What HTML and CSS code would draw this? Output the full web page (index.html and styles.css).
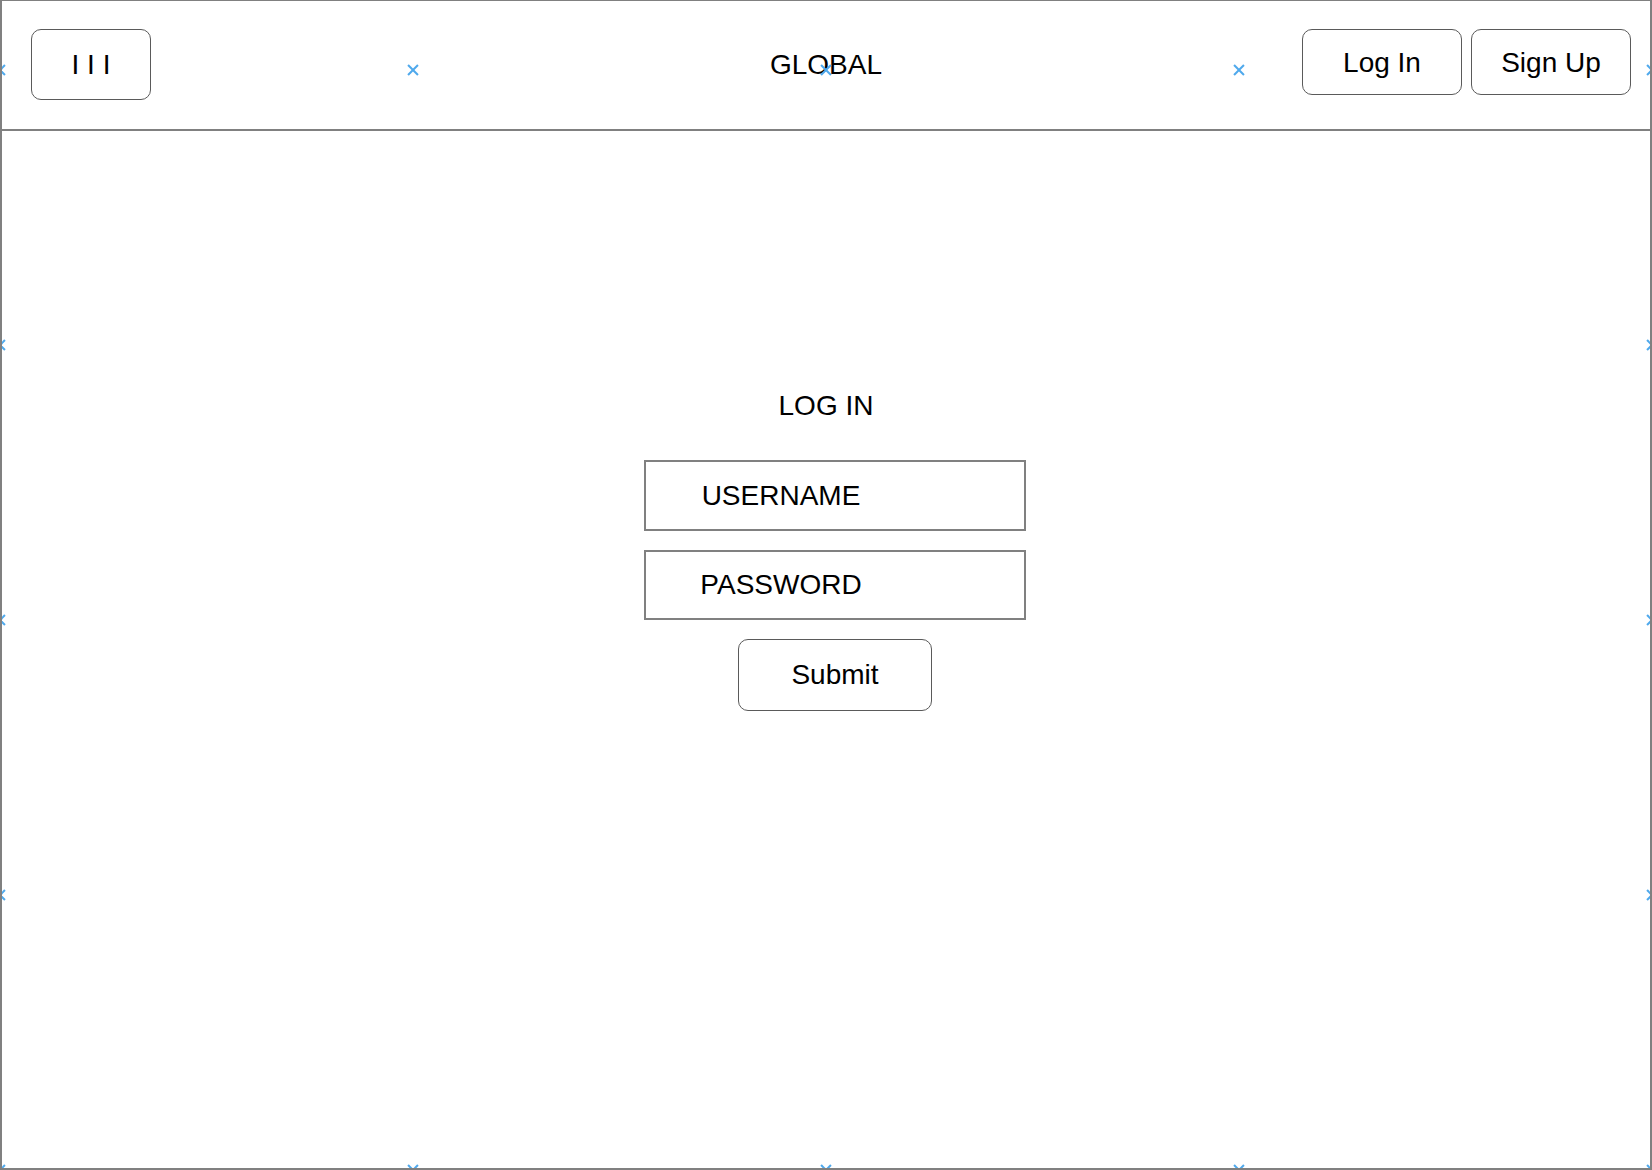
FILE: index.html
```html
<!DOCTYPE html>
<html lang="en">
<head>
<meta charset="utf-8">
<title>GLOBAL - Log In</title>
<link rel="stylesheet" href="styles.css">
</head>
<body>
<div class="page">
  <header class="topbar">
    <div class="menu-btn">I I I</div>
    <div class="brand">GLOBAL</div>
    <div class="auth">
      <div class="btn">Log In</div>
      <div class="btn">Sign Up</div>
    </div>
  </header>
  <main class="main">
    <div class="login">
      <div class="login-title">LOG IN</div>
      <div class="field">USERNAME</div>
      <div class="field field-second">PASSWORD</div>
      <div class="submit">Submit</div>
    </div>
  </main>
  <div class="guides">
    <span class="mark x0 y0"></span>
    <span class="mark x1 y0"></span>
    <span class="mark x2 y0"></span>
    <span class="mark x3 y0"></span>
    <span class="mark x4 y0"></span>
    <span class="mark x0 y1"></span>
    <span class="mark x0 y2"></span>
    <span class="mark x0 y3"></span>
    <span class="mark x4 y1"></span>
    <span class="mark x4 y2"></span>
    <span class="mark x4 y3"></span>
    <span class="mark x0 y4"></span>
    <span class="mark x1 y4"></span>
    <span class="mark x2 y4"></span>
    <span class="mark x3 y4"></span>
    <span class="mark x4 y4"></span>
  </div>
</div>
</body>
</html>
```

FILE: styles.css
```css
html, body {
  margin: 0;
  padding: 0;
  overflow: hidden;
  background: #ffffff;
}

body {
  font-family: "Liberation Sans", Arial, Helvetica, sans-serif;
  color: #000000;
}

.page {
  position: relative;
  box-sizing: border-box;
  width: 1652px;
  height: 1170px;
  border: 2px solid #808080;
  border-top-width: 1px;
  overflow: hidden;
}

.topbar {
  box-sizing: border-box;
  height: 130px;
  border-bottom: 2px solid #808080;
  padding-top: 28px;
  display: grid;
  grid-template-columns: 1fr auto 1fr;
  align-items: start;
}

.menu-btn {
  box-sizing: border-box;
  width: 120px;
  height: 71px;
  margin-left: 29px;
  border: 1px solid #5a5a5a;
  border-radius: 10px;
  display: flex;
  align-items: center;
  justify-content: center;
  font-size: 28px;
  line-height: 32px;
}

.brand {
  margin-top: 20px;
  font-size: 28px;
  line-height: 32px;
}

.auth {
  justify-self: end;
  margin-right: 19px;
  display: flex;
  gap: 9px;
}

.btn {
  box-sizing: border-box;
  width: 160px;
  height: 66px;
  border: 1px solid #5a5a5a;
  border-radius: 10px;
  padding-top: 1px;
  display: flex;
  align-items: center;
  justify-content: center;
  font-size: 28px;
  line-height: 32px;
}

.main {
  padding-top: 259px;
  display: flex;
  justify-content: center;
}

.login {
  display: flex;
  flex-direction: column;
  align-items: center;
}

.login-title {
  font-size: 28px;
  line-height: 32px;
  margin-bottom: 38px;
}

.field {
  box-sizing: border-box;
  width: 382px;
  height: 71px;
  margin-left: 18px;
  border: 2px solid #808080;
  padding-right: 108px;
  display: flex;
  align-items: center;
  justify-content: center;
  font-size: 28px;
  line-height: 32px;
}

.field-second {
  margin-top: 19px;
  height: 70px;
}

.submit {
  box-sizing: border-box;
  width: 194px;
  height: 72px;
  margin-top: 19px;
  margin-left: 18px;
  border: 1px solid #5a5a5a;
  border-radius: 10px;
  display: flex;
  align-items: center;
  justify-content: center;
  font-size: 28px;
  line-height: 32px;
}

.guides {
  position: absolute;
  left: -2px;
  top: 69px;
  width: 1652px;
  height: 1100px;
  pointer-events: none;
}

.mark {
  position: absolute;
  width: 10px;
  height: 10px;
  transform: translate(-50%, -50%);
}

.mark::before,
.mark::after {
  content: "";
  position: absolute;
  left: -2px;
  top: 4px;
  width: 14px;
  height: 2px;
  background: #4fa9ec;
}

.mark::before {
  transform: rotate(45deg);
}

.mark::after {
  transform: rotate(-45deg);
}

.x0 { left: 0; }
.x1 { left: 25%; }
.x2 { left: 50%; }
.x3 { left: 75%; }
.x4 { left: 100%; }
.y0 { top: 0; }
.y1 { top: 25%; }
.y2 { top: 50%; }
.y3 { top: 75%; }
.y4 { top: 100%; }
```
